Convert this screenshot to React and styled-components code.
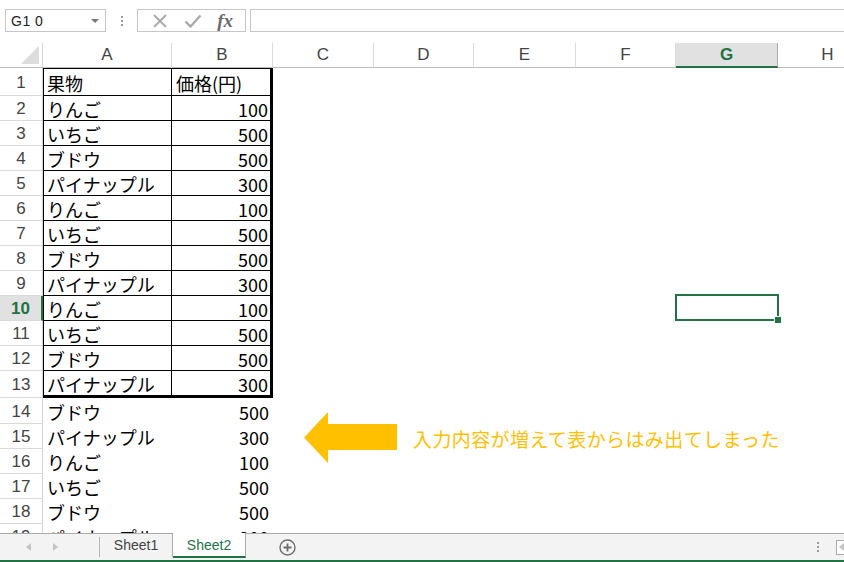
import React from "react";
import styled, { createGlobalStyle } from "styled-components";

const GlobalStyle = createGlobalStyle`
  html, body {
    margin: 0;
    padding: 0;
    background: #ffffff;
  }
  * {
    box-sizing: border-box;
  }
`;

const GREEN = "#217346";
const CELL_FONT = `"Noto Sans CJK JP", "Noto Sans", sans-serif`;
const UI_FONT = `"Liberation Sans", Arial, sans-serif`;

const Window = styled.div`
  width: 844px;
  height: 562px;
  overflow: hidden;
  display: flex;
  flex-direction: column;
  background: #ffffff;
  font-family: ${UI_FONT};
`;

/* ---------- formula bar ---------- */

const FormulaBar = styled.div`
  height: 43px;
  flex: none;
  display: flex;
  align-items: center;
  padding: 0 0 2px 5px;
`;

const NameBox = styled.div`
  width: 101px;
  height: 23px;
  border: 1px solid #c6c6c6;
  display: flex;
  align-items: center;
  justify-content: space-between;
  padding: 0 6px 0 5px;
  font-size: 14px;
  color: #222;
  letter-spacing: 0.5px;
`;

const DropArrow = styled.span`
  width: 0;
  height: 0;
  border-left: 4px solid transparent;
  border-right: 4px solid transparent;
  border-top: 4px solid #777;
`;

const Grip = styled.div`
  width: 31px;
  display: flex;
  flex-direction: column;
  align-items: center;
  gap: 2px;
  span {
    width: 2px;
    height: 2px;
    background: #9a9a9a;
  }
`;

const FxBox = styled.div`
  width: 109px;
  height: 23px;
  border: 1px solid #c6c6c6;
  display: flex;
  align-items: center;
  justify-content: space-around;
  padding: 0 4px 0 6px;
`;

const FxLabel = styled.span`
  font-family: "Liberation Serif", "DejaVu Serif", serif;
  font-style: italic;
  font-weight: bold;
  font-size: 19px;
  color: #6b6b6b;
  line-height: 1;
`;

const FormulaInput = styled.div`
  flex: 1;
  height: 23px;
  margin-left: 4px;
  margin-right: -4px;
  border: 1px solid #c6c6c6;
`;

/* ---------- sheet ---------- */

const Sheet = styled.div`
  flex: 1;
  position: relative;
  overflow: hidden;
`;

const Row = styled.div`
  display: flex;
  height: ${(p) => p.$h}px;
`;

const Corner = styled.div`
  width: 43px;
  flex: none;
  border-right: 1px solid #d4d4d4;
  border-bottom: 1px solid #bdbdbd;
  position: relative;
  &::after {
    content: "";
    position: absolute;
    right: 3px;
    bottom: 3px;
    width: 0;
    height: 0;
    border-left: 18px solid transparent;
    border-bottom: 18px solid #dcdcdc;
  }
`;

const ColHeader = styled.div`
  width: ${(p) => p.$w}px;
  flex: none;
  display: flex;
  align-items: center;
  justify-content: center;
  font-size: 17px;
  color: ${(p) => (p.$active ? GREEN : "#444")};
  font-weight: ${(p) => (p.$active ? "bold" : "normal")};
  background: ${(p) => (p.$active ? "#e1e1e1" : "#ffffff")};
  border-right: 1px solid ${(p) => (p.$active ? "#ababab" : "#dadada")};
  border-bottom: ${(p) => (p.$active ? `2px solid ${GREEN}` : "1px solid #bdbdbd")};
  padding-top: ${(p) => (p.$active ? "1px" : "0")};
`;

const RowHeader = styled.div`
  width: 43px;
  flex: none;
  display: flex;
  align-items: center;
  justify-content: center;
  font-size: 17px;
  color: ${(p) => (p.$active ? GREEN : "#444")};
  font-weight: ${(p) => (p.$active ? "bold" : "normal")};
  background: ${(p) => (p.$active ? "#e1e1e1" : "#ffffff")};
  border-right: ${(p) => (p.$active ? `2px solid ${GREEN}` : "1px solid #d4d4d4")};
  border-bottom: 1px solid #dadada;
  padding-top: 2px;
`;

const Cell = styled.div`
  width: ${(p) => p.$w}px;
  flex: none;
  display: flex;
  align-items: center;
  justify-content: ${(p) => (p.$num ? "flex-end" : "flex-start")};
  padding: 1px 4px 0 4px;
  font-family: ${CELL_FONT};
  font-size: 18px;
  line-height: 1;
  color: #000;
  white-space: nowrap;
  position: relative;
`;

const TableCell = styled(Cell)`
  border-right: ${(p) => (p.$lastCol ? "3px" : "1px")} solid #000;
  border-bottom: ${(p) => (p.$lastRow ? "3px" : "1px")} solid #000;
  border-left: ${(p) => (p.$firstCol ? "1px solid #000" : "none")};
  border-top: ${(p) => (p.$firstRow ? "1px solid #000" : "none")};
  padding-left: ${(p) => (p.$firstCol ? "3px" : "4px")};
  padding-right: ${(p) => (p.$lastCol ? "2px" : "4px")};
`;

const Selection = styled.div`
  position: absolute;
  left: -1px;
  top: -2px;
  right: -1px;
  bottom: 0;
  border: 2px solid ${GREEN};
  &::after {
    content: "";
    position: absolute;
    right: -5px;
    bottom: -5px;
    width: 6px;
    height: 6px;
    background: ${GREEN};
    border: 1px solid #fff;
  }
`;

const Callout = styled.div`
  position: absolute;
  left: 304px;
  top: 369px;
  display: flex;
  align-items: center;
  gap: 16px;
`;

const CalloutText = styled.span`
  font-family: ${CELL_FONT};
  font-size: 19px;
  letter-spacing: 0.4px;
  line-height: 1;
  color: #ffc000;
  white-space: nowrap;
  padding-top: 1px;
`;

/* ---------- sheet tabs ---------- */

const TabBar = styled.div`
  height: 29px;
  flex: none;
  display: flex;
  align-items: stretch;
  background: #f3f3f3;
  border-top: 1px solid #ababab;
  border-bottom: 2px solid ${GREEN};
`;

const NavArrows = styled.div`
  width: 100px;
  display: flex;
  align-items: center;
  padding-left: 26px;
  gap: 22px;
  border-right: 1px solid #b5b5b5;
  margin: 3px 0 3px 0;
`;

const NavArrow = styled.span`
  width: 0;
  height: 0;
  border-top: 4px solid transparent;
  border-bottom: 4px solid transparent;
  ${(p) => (p.$left ? "border-right: 5px solid #c4c4c4;" : "border-left: 5px solid #c4c4c4;")}
`;

const Tab = styled.div`
  width: 73px;
  display: flex;
  align-items: center;
  justify-content: center;
  font-size: 14px;
  color: ${(p) => (p.$active ? GREEN : "#444")};
  background: ${(p) => (p.$active ? "#ffffff" : "transparent")};
  border-right: 1px solid #ababab;
  border-bottom: ${(p) => (p.$active ? `2px solid ${GREEN}` : "2px solid transparent")};
  margin-top: -1px;
  margin-bottom: 2px;
  padding-top: 1px;
`;

const AddSheet = styled.div`
  width: 82px;
  display: flex;
  align-items: center;
  justify-content: center;
`;

const Spacer = styled.div`
  flex: 1;
`;

const RightTools = styled.div`
  display: flex;
  align-items: center;
  gap: 3px;
`;

const ScrollBox = styled.div`
  width: 8px;
  height: 15px;
  border: 1px solid #ababab;
  border-right: none;
  background: #fff;
  display: flex;
  align-items: center;
  justify-content: flex-end;
`;

const COLS = [
  { label: "A", w: 129 },
  { label: "B", w: 101 },
  { label: "C", w: 101 },
  { label: "D", w: 100 },
  { label: "E", w: 102 },
  { label: "F", w: 100 },
  { label: "G", w: 102 },
  { label: "H", w: 100 },
];

const fruits = [
  ["りんご", 100],
  ["いちご", 500],
  ["ブドウ", 500],
  ["パイナップル", 300],
];

const TABLE_END = 13;
const ACTIVE_ROW = 10;
const ACTIVE_COL = 6;

// rows 2-13 are the bordered table, 14 onwards were typed in after it
const body = [];
for (let n = 2; n <= 19; n++) {
  const idx = n <= TABLE_END ? (n - 2) % 4 : (n - 12) % 4;
  body.push({ n, fruit: fruits[idx] });
}

const ROWS = [
  { n: 1, h: 28, a: "果物", b: "価格(円)", head: true },
  ...body.map(({ n, fruit }) => ({
    n,
    h: n === 13 ? 27 : n === 14 ? 26 : 25,
    a: fruit[0],
    b: String(fruit[1]),
  })),
];

const CrossIcon = () => (
  <svg width="16" height="16" viewBox="0 0 16 16">
    <path d="M2 2 L14 14 M14 2 L2 14" stroke="#a9a9a9" strokeWidth="1.8" fill="none" />
  </svg>
);

const CheckIcon = () => (
  <svg width="18" height="16" viewBox="0 0 18 16">
    <path d="M1.5 8.5 L6.5 13.5 L16.5 2.5" stroke="#a9a9a9" strokeWidth="2.4" fill="none" />
  </svg>
);

const PlusCircle = () => (
  <svg width="17" height="17" viewBox="0 0 17 17">
    <circle cx="8.5" cy="8.5" r="7.5" stroke="#6e6e6e" strokeWidth="1.4" fill="none" />
    <path d="M8.5 4.5 V12.5 M4.5 8.5 H12.5" stroke="#6e6e6e" strokeWidth="1.8" />
  </svg>
);

const ArrowShape = () => (
  <svg width="93" height="51" viewBox="0 0 93 51">
    <polygon points="0,25.5 24,0 24,12 93,12 93,38 24,38 24,51" fill="#ffc000" />
  </svg>
);

const SheetRow = ({ row }) => {
  const inTable = row.n <= TABLE_END;
  const C = inTable ? TableCell : Cell;
  return (
    <Row $h={row.h}>
      <RowHeader $active={row.n === ACTIVE_ROW}>{row.n}</RowHeader>
      <C
        $w={COLS[0].w}
        $firstCol
        $firstRow={row.n === 1}
        $lastRow={row.n === TABLE_END}
      >
        {row.a}
      </C>
      <C
        $w={COLS[1].w}
        $num={!row.head}
        $lastCol
        $firstRow={row.n === 1}
        $lastRow={row.n === TABLE_END}
      >
        {row.b}
      </C>
      {COLS.slice(2).map((c, i) => (
        <Cell key={c.label} $w={c.w}>
          {row.n === ACTIVE_ROW && i + 2 === ACTIVE_COL && <Selection />}
        </Cell>
      ))}
    </Row>
  );
};

export default function App() {
  return (
    <Window>
      <GlobalStyle />
      <FormulaBar>
        <NameBox>
          <span>G1 0</span>
          <DropArrow />
        </NameBox>
        <Grip>
          <span />
          <span />
          <span />
        </Grip>
        <FxBox>
          <CrossIcon />
          <CheckIcon />
          <FxLabel>fx</FxLabel>
        </FxBox>
        <FormulaInput />
      </FormulaBar>

      <Sheet>
        <Row $h={25}>
          <Corner />
          {COLS.map((c, i) => (
            <ColHeader key={c.label} $w={c.w} $active={i === ACTIVE_COL}>
              {c.label}
            </ColHeader>
          ))}
        </Row>
        {ROWS.map((r) => (
          <SheetRow key={r.n} row={r} />
        ))}
        <Callout>
          <ArrowShape />
          <CalloutText>入力内容が増えて表からはみ出てしまった</CalloutText>
        </Callout>
      </Sheet>

      <TabBar>
        <NavArrows>
          <NavArrow $left />
          <NavArrow />
        </NavArrows>
        <Tab>Sheet1</Tab>
        <Tab $active>Sheet2</Tab>
        <AddSheet>
          <PlusCircle />
        </AddSheet>
        <Spacer />
        <RightTools>
          <Grip>
            <span />
            <span />
            <span />
          </Grip>
          <ScrollBox>
            <NavArrow $left />
          </ScrollBox>
        </RightTools>
      </TabBar>
    </Window>
  );
}
